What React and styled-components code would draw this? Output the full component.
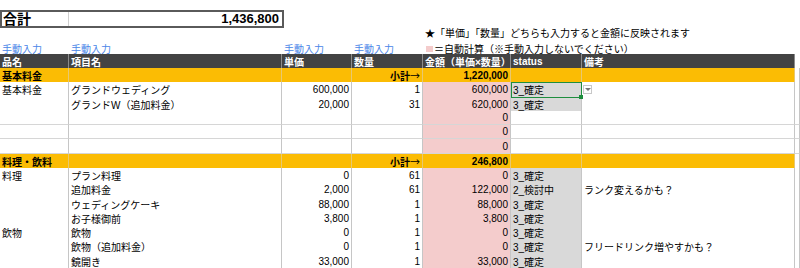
import React from "react";
import styled, { createGlobalStyle } from "styled-components";

const COLS = "69px 213px 70px 71px 88px 71px 213px 1fr";

const sections = [
  {
    name: "基本料金",
    subtotal: "1,220,000",
    rows: [
      { cat: "基本料金", item: "グランドウェディング", price: "600,000", qty: "1", amount: "600,000", status: "3_確定", selected: true },
      { item: "グランドW（追加料金）", price: "20,000", qty: "31", amount: "620,000", status: "3_確定" },
      { amount: "0" },
      { amount: "0" },
      { amount: "0" },
    ],
  },
  {
    name: "料理・飲料",
    subtotal: "246,800",
    rows: [
      { cat: "料理", item: "プラン料理", price: "0", qty: "61", amount: "0", status: "3_確定" },
      { item: "追加料金", price: "2,000", qty: "61", amount: "122,000", status: "2_検討中", note: "ランク変えるかも？" },
      { item: "ウェディングケーキ", price: "88,000", qty: "1", amount: "88,000", status: "3_確定" },
      { item: "お子様御前", price: "3,800", qty: "1", amount: "3,800", status: "3_確定" },
      { cat: "飲物", item: "飲物", price: "0", qty: "1", amount: "0", status: "3_確定" },
      { item: "飲物（追加料金）", price: "0", qty: "1", amount: "0", status: "3_確定", note: "フリードリンク増やすかも？" },
      { item: "鏡開き", price: "33,000", qty: "1", amount: "33,000", status: "3_確定" },
    ],
  },
];

const headers = ["品名", "項目名", "単価", "数量", "金額（単価×数量）", "status", "備考", ""];

function App() {
  return (
    <>
      <GlobalStyle />
      <SSheet>
        <STop>
          <SSumBox>
            <SSumCell>合計</SSumCell>
            <SSumCell $right>1,436,800</SSumCell>
          </SSumBox>
          <SNote>★「単価」「数量」どちらも入力すると金額に反映されます</SNote>
          <SLabelRow>
            <SLabel>手動入力</SLabel>
            <SLabel>手動入力</SLabel>
            <SLabel>手動入力</SLabel>
            <SLabel>手動入力</SLabel>
            <SLegend>
              <SSwatch />＝自動計算（※手動入力しないでください）
            </SLegend>
          </SLabelRow>
        </STop>

        <SRow $h={14}>
          {headers.map((h, i) => (
            <SHeadCell key={i}>{h}</SHeadCell>
          ))}
        </SRow>

        {sections.map((sec) => (
          <React.Fragment key={sec.name}>
            <SRow>
              <SSectionCell>{sec.name}</SSectionCell>
              <SSectionCell />
              <SSectionCell />
              <SSectionCell $right>
                小計<SArrow>→</SArrow>
              </SSectionCell>
              <SSectionCell $right>{sec.subtotal}</SSectionCell>
              <SSectionCell />
              <SSectionCell />
              <SCell />
            </SRow>
            {sec.rows.map((r, i) => (
              <SRow key={i}>
                <SCell>{r.cat}</SCell>
                <SCell>{r.item}</SCell>
                <SCell $right>{r.price}</SCell>
                <SCell $right>{r.qty}</SCell>
                <SCell $right $bg="#f4cccc">{r.amount}</SCell>
                <SStatusCell $filled={!!r.status} $selected={r.selected}>
                  {r.status}
                  {r.selected && <SHandle />}
                </SStatusCell>
                <SCell>
                  {r.selected && <SDropdown />}
                  {r.note}
                </SCell>
                <SCell />
              </SRow>
            ))}
          </React.Fragment>
        ))}
      </SSheet>
    </>
  );
}

export default App;

const GlobalStyle = createGlobalStyle`
  html, body {
    margin: 0;
    padding: 0;
    background: #ffffff;
  }
  body {
    font-family: "Liberation Sans", "Noto Sans CJK JP", sans-serif;
    font-size: 10px;
    color: #000;
  }
`;

const SSheet = styled.div`
  width: 800px;
  height: 268px;
  overflow: hidden;
`;

const STop = styled.div`
  display: flex;
  flex-direction: column;
  height: 54px;
`;

const SSumBox = styled.div`
  margin-top: 10px;
  width: 284px;
  height: 18px;
  box-sizing: border-box;
  border: 2px solid #5a5a5a;
  display: grid;
  grid-template-columns: 67px 1fr;
`;

const SSumCell = styled.div`
  display: flex;
  align-items: center;
  justify-content: ${(p) => (p.$right ? "flex-end" : "flex-start")};
  padding: 0 3px 0 1px;
  font-size: ${(p) => (p.$right ? "13px" : "14px")};
  line-height: 14px;
  font-weight: 700;
  border-right: ${(p) => (p.$right ? "none" : "1px solid #cfcfcf")};
`;

const SNote = styled.div`
  height: 13px;
  padding-left: 425px;
  line-height: 12px;
  white-space: nowrap;
`;

const SLabelRow = styled.div`
  display: grid;
  grid-template-columns: ${COLS};
  height: 13px;
  align-items: center;
`;

const SLabel = styled.div`
  color: #4a86e8;
  padding-left: 2px;
  white-space: nowrap;
`;

const SLegend = styled.div`
  grid-column: 5 / 9;
  display: flex;
  align-items: center;
  padding-left: 3px;
  white-space: nowrap;
`;

const SSwatch = styled.span`
  display: inline-block;
  width: 7px;
  height: 6px;
  margin-right: 1px;
  background: #f4cccc;
`;

const SRow = styled.div`
  display: grid;
  grid-template-columns: ${COLS};
  height: ${(p) => (p.$h ? `${p.$h}px` : "14.29px")};
`;

const SCell = styled.div`
  position: relative;
  display: flex;
  align-items: center;
  justify-content: ${(p) => (p.$right ? "flex-end" : "flex-start")};
  padding: 0 2px;
  box-sizing: border-box;
  background: ${(p) => p.$bg || "#ffffff"};
  border-right: 1px solid #c6c6c6;
  border-bottom: 1px solid #d6d6d6;
  white-space: nowrap;
  overflow: visible;
`;

const SHeadCell = styled(SCell)`
  background: #434343;
  color: #ffffff;
  font-weight: 700;
  border-right: 1px solid #8c8c8c;
  border-bottom: 1px solid #8c8c8c;
  &:last-child {
    background: #ffffff;
    border-right: none;
    border-bottom: 1px solid #d6d6d6;
  }
`;

const SSectionCell = styled(SCell)`
  background: #fbbc04;
  font-weight: 700;
  border-right: 1px solid #e8c870;
  border-bottom: 1px solid #d9c07a;
`;

const SArrow = styled.span`
  font-family: "Noto Sans CJK JP", sans-serif;
  font-weight: 400;
`;

const SStatusCell = styled(SCell)`
  background: ${(p) => (p.$filled ? "#d9d9d9" : "#ffffff")};
  ${(p) =>
    p.$selected &&
    `
    outline: 1px solid #1e8e3e;
    outline-offset: -1px;
    z-index: 1;
  `}
`;

const SHandle = styled.span`
  position: absolute;
  right: -2px;
  bottom: -2px;
  width: 4px;
  height: 4px;
  background: #1e8e3e;
`;

const SDropdown = styled.span`
  position: relative;
  display: inline-block;
  width: 9px;
  height: 9px;
  margin-left: -1px;
  margin-right: 2px;
  box-sizing: border-box;
  border: 1px solid #c8c8c8;
  background: #fff;
  &::after {
    content: "";
    position: absolute;
    left: 1px;
    top: 2px;
    border-left: 3px solid transparent;
    border-right: 3px solid transparent;
    border-top: 3px solid #777;
  }
`;
